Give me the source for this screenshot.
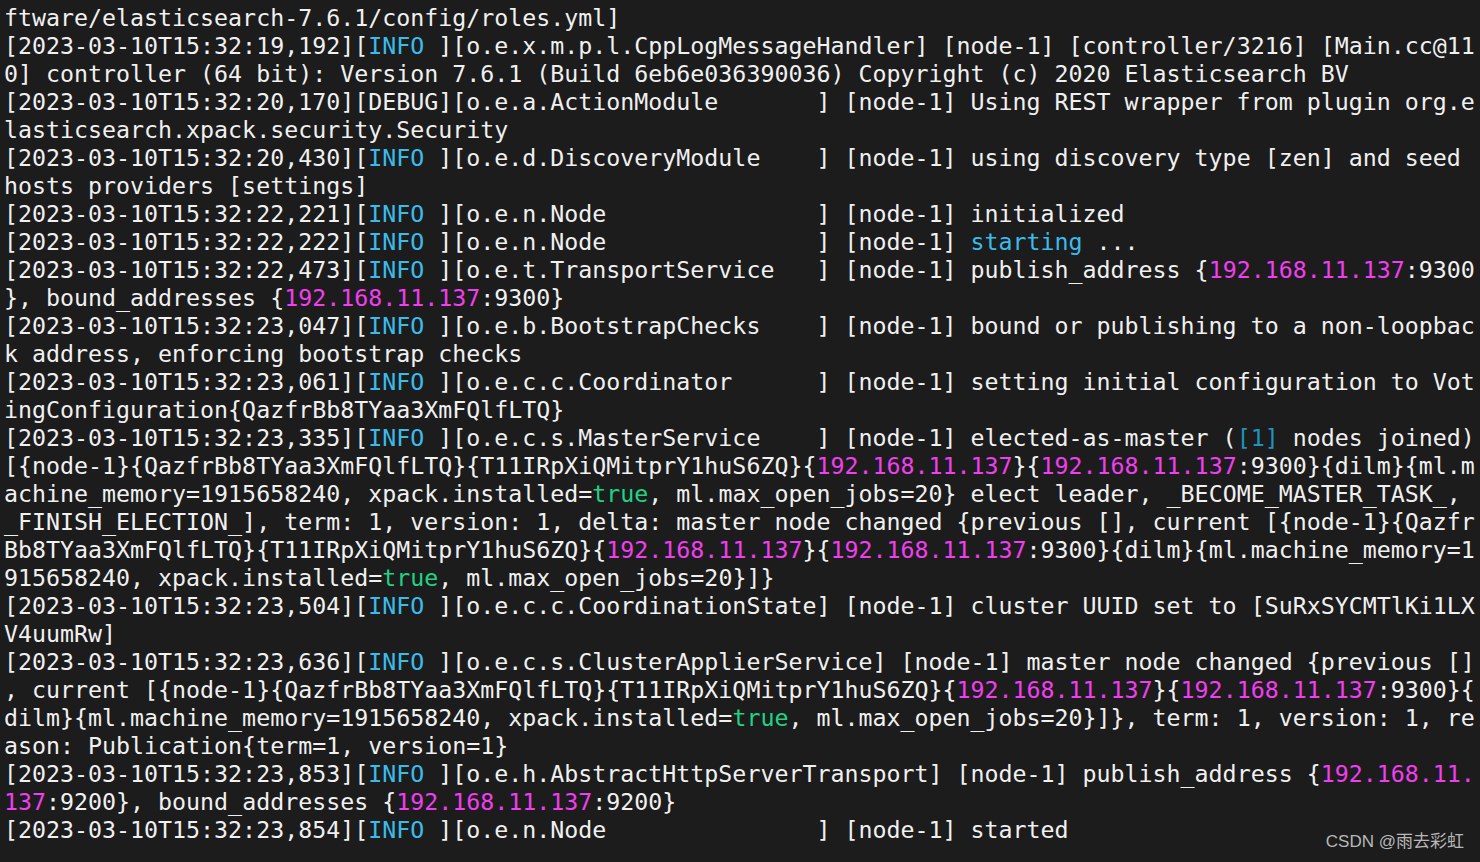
import React from "react";

// terminal colours
const C = {
  i: "text-[#3bbbea]", // INFO / starting
  b: "text-[#1d93c0]", // [1]
  p: "text-[#f03ef0]", // ip addresses
  g: "text-[#1fd384]", // true
};

const lines = [
  "ftware/elasticsearch-7.6.1/config/roles.yml]",
  "[2023-03-10T15:32:19,192][«i|INFO» ][o.e.x.m.p.l.CppLogMessageHandler] [node-1] [controller/3216] [Main.cc@11",
  "0] controller (64 bit): Version 7.6.1 (Build 6eb6e036390036) Copyright (c) 2020 Elasticsearch BV",
  "[2023-03-10T15:32:20,170][DEBUG][o.e.a.ActionModule       ] [node-1] Using REST wrapper from plugin org.e",
  "lasticsearch.xpack.security.Security",
  "[2023-03-10T15:32:20,430][«i|INFO» ][o.e.d.DiscoveryModule    ] [node-1] using discovery type [zen] and seed",
  "hosts providers [settings]",
  "[2023-03-10T15:32:22,221][«i|INFO» ][o.e.n.Node               ] [node-1] initialized",
  "[2023-03-10T15:32:22,222][«i|INFO» ][o.e.n.Node               ] [node-1] «i|starting» ...",
  "[2023-03-10T15:32:22,473][«i|INFO» ][o.e.t.TransportService   ] [node-1] publish_address {«p|192.168.11.137»:9300",
  "}, bound_addresses {«p|192.168.11.137»:9300}",
  "[2023-03-10T15:32:23,047][«i|INFO» ][o.e.b.BootstrapChecks    ] [node-1] bound or publishing to a non-loopbac",
  "k address, enforcing bootstrap checks",
  "[2023-03-10T15:32:23,061][«i|INFO» ][o.e.c.c.Coordinator      ] [node-1] setting initial configuration to Vot",
  "ingConfiguration{QazfrBb8TYaa3XmFQlfLTQ}",
  "[2023-03-10T15:32:23,335][«i|INFO» ][o.e.c.s.MasterService    ] [node-1] elected-as-master («b|[1]» nodes joined)",
  "[{node-1}{QazfrBb8TYaa3XmFQlfLTQ}{T11IRpXiQMitprY1huS6ZQ}{«p|192.168.11.137»}{«p|192.168.11.137»:9300}{dilm}{ml.m",
  "achine_memory=1915658240, xpack.installed=«g|true», ml.max_open_jobs=20} elect leader, _BECOME_MASTER_TASK_,",
  "_FINISH_ELECTION_], term: 1, version: 1, delta: master node changed {previous [], current [{node-1}{Qazfr",
  "Bb8TYaa3XmFQlfLTQ}{T11IRpXiQMitprY1huS6ZQ}{«p|192.168.11.137»}{«p|192.168.11.137»:9300}{dilm}{ml.machine_memory=1",
  "915658240, xpack.installed=«g|true», ml.max_open_jobs=20}]}",
  "[2023-03-10T15:32:23,504][«i|INFO» ][o.e.c.c.CoordinationState] [node-1] cluster UUID set to [SuRxSYCMTlKi1LX",
  "V4uumRw]",
  "[2023-03-10T15:32:23,636][«i|INFO» ][o.e.c.s.ClusterApplierService] [node-1] master node changed {previous []",
  ", current [{node-1}{QazfrBb8TYaa3XmFQlfLTQ}{T11IRpXiQMitprY1huS6ZQ}{«p|192.168.11.137»}{«p|192.168.11.137»:9300}{",
  "dilm}{ml.machine_memory=1915658240, xpack.installed=«g|true», ml.max_open_jobs=20}]}, term: 1, version: 1, re",
  "ason: Publication{term=1, version=1}",
  "[2023-03-10T15:32:23,853][«i|INFO» ][o.e.h.AbstractHttpServerTransport] [node-1] publish_address {«p|192.168.11.»",
  "«p|137»:9200}, bound_addresses {«p|192.168.11.137»:9200}",
  "[2023-03-10T15:32:23,854][«i|INFO» ][o.e.n.Node               ] [node-1] started",
];

const Line = ({ text }) => {
  const parts = [];
  const re = /«(\w)\|([^»]*)»/g;
  let last = 0;
  let m;
  while ((m = re.exec(text))) {
    if (m.index > last) parts.push(<span key={last}>{text.slice(last, m.index)}</span>);
    parts.push(
      <span key={m.index} className={C[m[1]]}>
        {m[2]}
      </span>
    );
    last = re.lastIndex;
  }
  if (last < text.length) parts.push(<span key={last}>{text.slice(last)}</span>);
  return <div className="h-[28px] whitespace-pre">{parts}</div>;
};

export default function App() {
  return (
    <div className="relative w-[1480px] h-[862px] overflow-hidden bg-[#1c1c1c]">
      <div className="pt-[4px] pl-[4px] text-[#f0f0f0] text-[23.27px] leading-[28px] font-['DejaVu_Sans_Mono',monospace]">
        {lines.map((l, i) => (
          <Line key={i} text={l} />
        ))}
      </div>
      <div className="absolute right-[16px] bottom-[8px] text-[17px] text-[#b8b8b8] font-['Liberation_Sans','Noto_Sans_CJK_SC',sans-serif]">
        CSDN @雨去彩虹
      </div>
    </div>
  );
}
